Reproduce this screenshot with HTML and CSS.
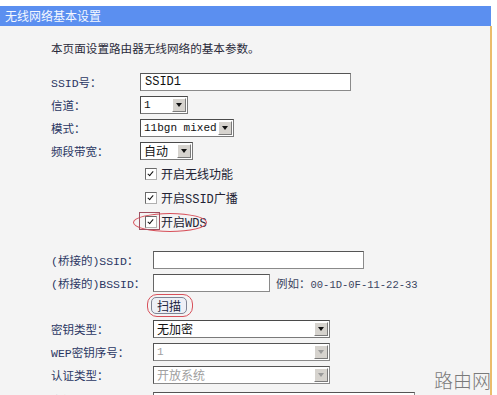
FILE: index.html
```html
<!DOCTYPE html>
<html lang="zh-CN">
<head>
    <meta charset="UTF-8">
    <title>无线网络基本设置</title>
    <link rel="stylesheet" href="styles.css">
</head>
<body>
    <div id="page">
        <div class="titlebar">无线网络基本设置</div>
        <div class="panel">
            <p class="intro">本页面设置路由器无线网络的基本参数。</p>

            <div class="form basic">
                <div class="row">
                    <span class="label">SSID号：</span>
                    <input class="field ssid" type="text" value="SSID1">
                </div>
                <div class="row">
                    <span class="label">信道：</span>
                    <div class="select w48"><span class="value">1</span><span class="arrow"></span></div>
                </div>
                <div class="row">
                    <span class="label">模式：</span>
                    <div class="select w93"><span class="value">11bgn mixed</span><span class="arrow"></span></div>
                </div>
                <div class="row">
                    <span class="label">频段带宽：</span>
                    <div class="select w53"><span class="value cjk">自动</span><span class="arrow"></span></div>
                </div>
                <div class="check-row">
                    <span class="check"></span>开启无线功能
                </div>
                <div class="check-row">
                    <span class="check"></span>开启SSID广播
                </div>
                <div class="check-row marked">
                    <span class="check"></span>开启WDS
                    <span class="ring wds-ring"></span>
                    <span class="focus-box"></span>
                </div>
            </div>

            <div class="form wds">
                <div class="row">
                    <span class="label">(桥接的)SSID：</span>
                    <input class="field wide" type="text" value="">
                </div>
                <div class="row">
                    <span class="label">(桥接的)BSSID：</span>
                    <input class="field bssid" type="text" value="">
                    <span class="hint">例如：<span class="mono">00-1D-0F-11-22-33</span></span>
                </div>
                <div class="row">
                    <span class="label"></span>
                    <span class="scan-wrap">
                        <button class="scan">扫描</button>
                        <span class="ring scan-ring"></span>
                    </span>
                </div>
                <div class="row">
                    <span class="label">密钥类型：</span>
                    <div class="select w177"><span class="value cjk">无加密</span><span class="arrow"></span></div>
                </div>
                <div class="row">
                    <span class="label">WEP密钥序号：</span>
                    <div class="select w177 disabled"><span class="value">1</span><span class="arrow"></span></div>
                </div>
                <div class="row">
                    <span class="label">认证类型：</span>
                    <div class="select w177 disabled"><span class="value cjk">开放系统</span><span class="arrow"></span></div>
                </div>
                <div class="row last">
                    <span class="label">密钥：</span>
                    <input class="field key" type="text" value="">
                </div>
            </div>
        </div>
        <div class="watermark">路由网</div>
    </div>
</body>
</html>
```

FILE: styles.css
```css
body {
    margin: 0;
    background-color: #ffffff;
    font-family: "Noto Sans CJK SC", "Liberation Sans", sans-serif;
    font-size: 12px;
    color: #222a44;
    overflow: hidden;
}
#page {
    position: relative;
    width: 497px;
    height: 395px;
    padding-top: 6px;
    box-sizing: border-box;
    overflow: hidden;
}
.titlebar {
    width: 491px;
    height: 20px;
    line-height: 20px;
    padding-left: 5px;
    box-sizing: border-box;
    background-color: #5b8ff0;
    color: #f4f7ff;
    font-size: 12px;
}
.panel {
    width: 492px;
    height: 369px;
    box-sizing: border-box;
    background-color: #f4f4f4;
    border-right: 2px solid #ebbd6c;
    padding-left: 51px;
}
.intro {
    margin: 0;
    padding-top: 11px;
    height: 33px;
    line-height: 22px;
    font-size: 11.6px;
    color: #2a2a3a;
}
.row {
    display: flex;
    align-items: center;
    height: 23px;
}
.row.last {
    align-items: flex-start;
    padding-top: 6px;
    box-sizing: border-box;
}
.basic .label {
    width: 89px;
}
.wds {
    margin-top: 14px;
}
.wds .label {
    width: 102px;
}
.label {
    flex-shrink: 0;
    font-family: "Liberation Mono", "Noto Sans CJK SC", monospace;
    font-size: 11.5px;
    color: #2b3763;
}
.field {
    height: 18px;
    box-sizing: border-box;
    margin: 0;
    padding: 0 4px;
    border: 1px solid #8a8a8a;
    border-top-color: #555555;
    border-left-color: #666666;
    background-color: #ffffff;
    font-family: "Liberation Mono", monospace;
    font-size: 12px;
    color: #111111;
}
.ssid { width: 211px; }
.wide { width: 211px; }
.bssid { width: 117px; }
.key { width: 262px; }
.hint {
    margin-left: 6px;
    color: #3b4560;
    font-size: 11.5px;
}
.mono {
    font-family: "Liberation Mono", monospace;
    font-size: 10.5px;
}
.select {
    display: flex;
    align-items: center;
    height: 18px;
    box-sizing: border-box;
    border: 1px solid #7a7a7a;
    border-top-color: #4a4a4a;
    border-left-color: #4a4a4a;
    background-color: #ffffff;
    padding: 0 1px 0 3px;
}
.select .value {
    flex-grow: 1;
    font-family: "Liberation Mono", monospace;
    font-size: 11px;
    color: #111111;
    white-space: nowrap;
}
.select .value.cjk {
    font-family: "Noto Sans CJK SC", sans-serif;
    font-size: 12px;
}
.select .arrow {
    position: relative;
    width: 14px;
    height: 14px;
    box-sizing: border-box;
    background-color: #d6d3ce;
    border: 1px solid #ffffff;
    border-right-color: #7a7a7a;
    border-bottom-color: #7a7a7a;
}
.select .arrow::after {
    content: "";
    position: absolute;
    left: 3px;
    top: 4px;
    border-left: 3px solid transparent;
    border-right: 3px solid transparent;
    border-top: 4px solid #111111;
}
.select.disabled .value {
    color: #a0a0a0;
}
.select.disabled {
    border-color: #8a8a8a;
    border-top-color: #555555;
    border-left-color: #555555;
}
.select.disabled .arrow::after {
    border-top-color: #9a9a9a;
}
.w48 { width: 48px; }
.w53 { width: 53px; }
.w93 { width: 94px; }
.w177 { width: 177px; }

.check-row {
    position: relative;
    display: flex;
    align-items: center;
    height: 24px;
    padding-left: 94px;
    font-size: 12px;
    color: #222233;
    font-family: "Liberation Mono", "Noto Sans CJK SC", monospace;
}
.check {
    position: relative;
    width: 12px;
    height: 12px;
    box-sizing: border-box;
    margin-right: 4px;
    border: 1px solid #6a6a6a;
    border-bottom-color: #b0b0b0;
    border-right-color: #b0b0b0;
    background-color: #ffffff;
}
.check::after {
    content: "";
    position: absolute;
    left: 3px;
    top: 1px;
    width: 2px;
    height: 5px;
    border-right: 1.5px solid #111111;
    border-bottom: 1.5px solid #111111;
    transform: rotate(40deg);
}
.ring {
    position: absolute;
    border: 1px solid #d7505a;
    border-radius: 50%;
    pointer-events: none;
}
.wds-ring {
    left: 82px;
    top: 3px;
    width: 72px;
    height: 17px;
}
.focus-box {
    position: absolute;
    left: 88px;
    top: 2px;
    width: 19px;
    height: 16px;
    border: 1px solid #a05060;
}
.scan-wrap {
    position: relative;
    display: inline-block;
    margin-left: -2px;
}
.scan {
    height: 17px;
    padding: 0 5px;
    border: 1px solid #7f8494;
    border-radius: 5px;
    background-color: #eef0f6;
    font-family: "Noto Sans CJK SC", sans-serif;
    font-size: 12px;
    line-height: 14px;
    color: #1d2440;
}
.scan-ring {
    left: -4px;
    top: -3px;
    width: 44px;
    height: 21px;
    border-radius: 10px;
}
.watermark {
    position: absolute;
    right: 6px;
    bottom: 2px;
    font-family: "Noto Sans CJK SC", sans-serif;
    font-weight: 300;
    font-size: 19px;
    color: #7a7a7a;
}
```
